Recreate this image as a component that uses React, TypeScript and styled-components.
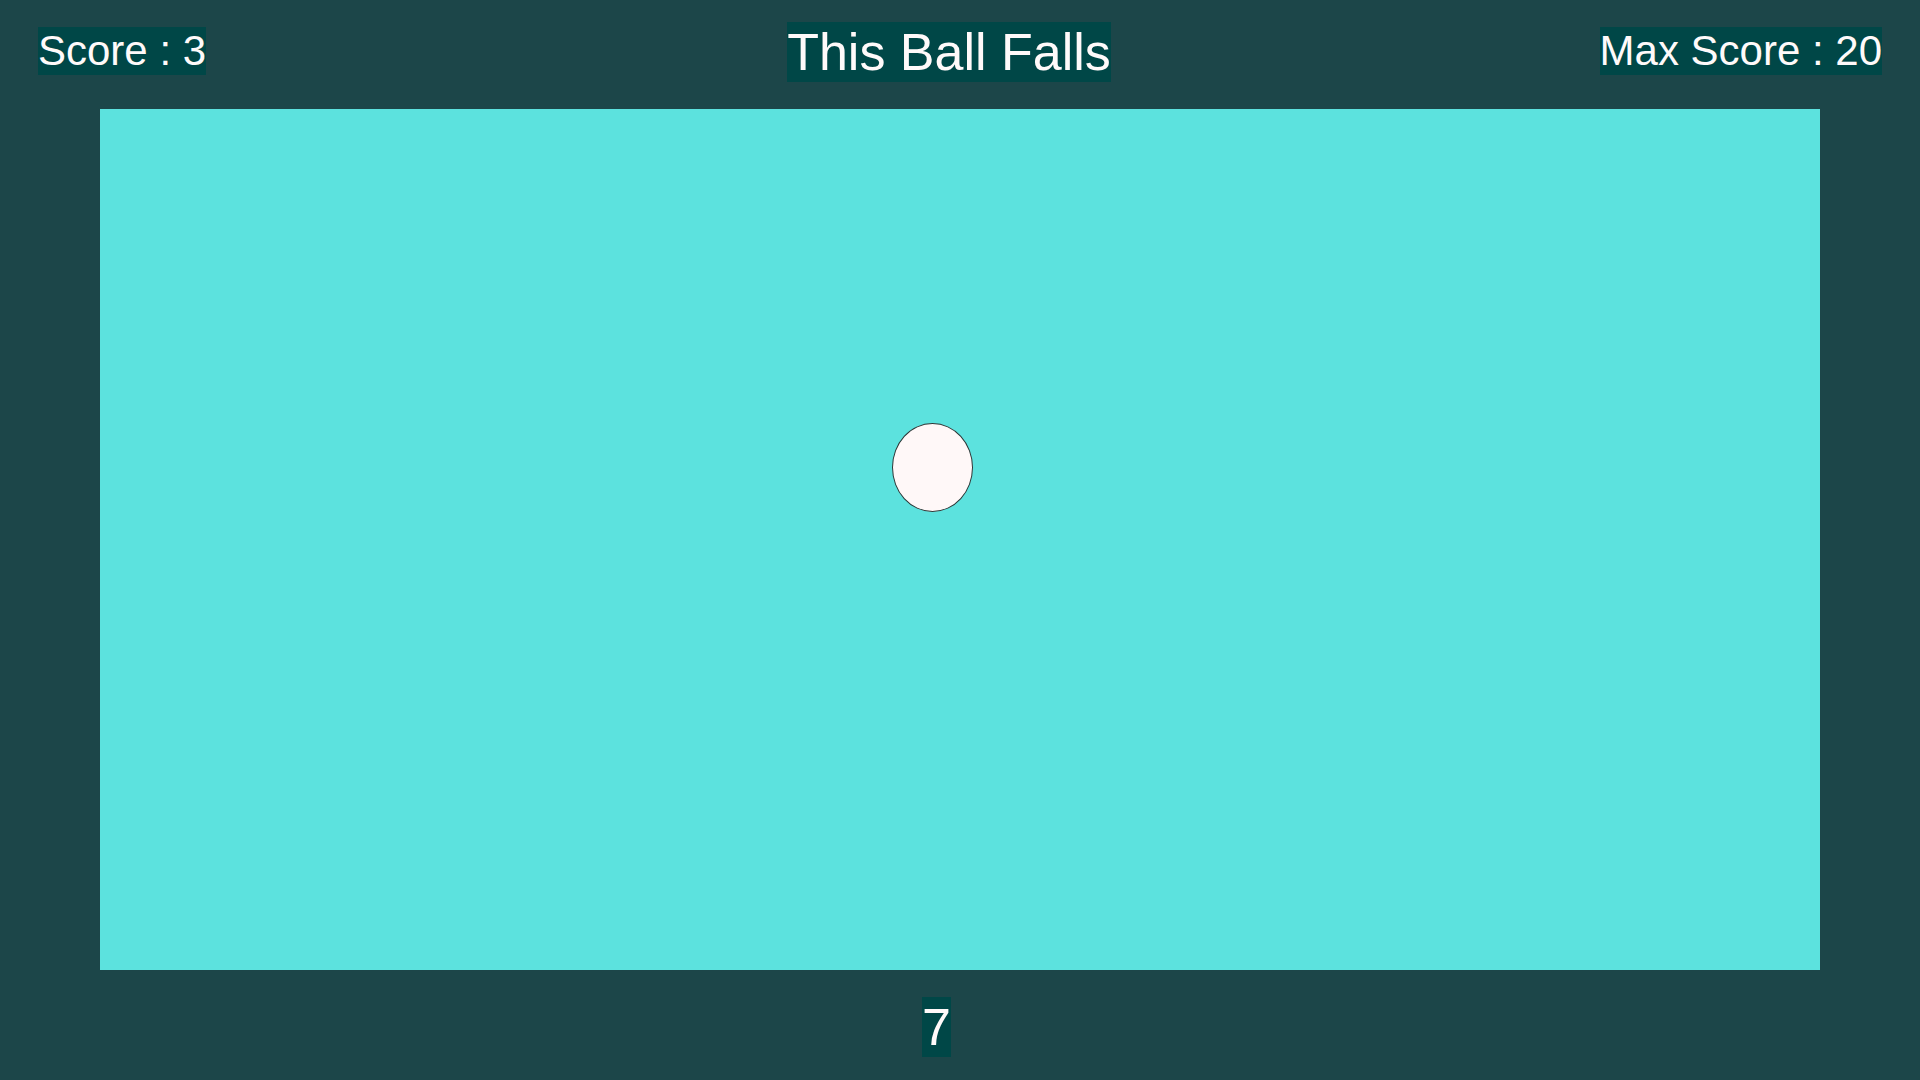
import React from "react";
import styled, { createGlobalStyle } from "styled-components";

const GlobalStyle = createGlobalStyle`
  html, body {
    margin: 0;
    padding: 0;
    background: #1c4649;
  }
  body {
    font-family: "Liberation Sans", Arial, sans-serif;
  }
`;

const Page = styled.div`
  width: 1920px;
  height: 1080px;
  box-sizing: border-box;
  padding-top: 22px;
  display: flex;
  flex-direction: column;
  gap: 27px;
  background: #1c4649;
  overflow: hidden;
`;

const Header = styled.header`
  display: grid;
  grid-template-columns: 1fr auto 1fr;
  align-items: center;
  padding: 0 38px;
  height: 60px;
`;

const Label = styled.div<{ $size: number; $align: "start" | "end" }>`
  justify-self: ${(p) => p.$align};
  background: #004747;
  color: #fffafa;
  font-size: ${(p) => p.$size}px;
  line-height: ${(p) => Math.round(p.$size * 1.149)}px;
  white-space: nowrap;
  margin-top: -2px;
`;

const Title = styled.h1`
  margin: 0 22px 0 0;
  background: #004747;
  color: #fffafa;
  font-weight: 400;
  font-size: 52px;
  line-height: 60px;
  white-space: nowrap;
`;

const Field = styled.main`
  position: relative;
  width: 1720px;
  height: 861px;
  margin: 0 auto;
  background: #5ce2de;
`;

const Ball = styled.div`
  position: absolute;
  box-sizing: border-box;
  border: 1.5px solid #2e3636;
  border-radius: 50%;
  background: #fff8f8;
`;

const Footer = styled.footer`
  display: flex;
  justify-content: center;
  padding-right: 47px;
`;

const Countdown = styled.div`
  background: #004747;
  color: #fffafa;
  font-size: 52px;
  line-height: 60px;
`;

export default function App() {
  const ball = { x: 792, y: 314, w: 81, h: 89 };
  return (
    <>
      <GlobalStyle />
      <Page>
        <Header>
          <Label $size={42} $align="start">Score : 3</Label>
          <Title>This Ball Falls</Title>
          <Label $size={42} $align="end">Max Score : 20</Label>
        </Header>
        <Field>
          <Ball
            style={{ left: ball.x, top: ball.y, width: ball.w, height: ball.h }}
          />
        </Field>
        <Footer>
          <Countdown>7</Countdown>
        </Footer>
      </Page>
    </>
  );
}
